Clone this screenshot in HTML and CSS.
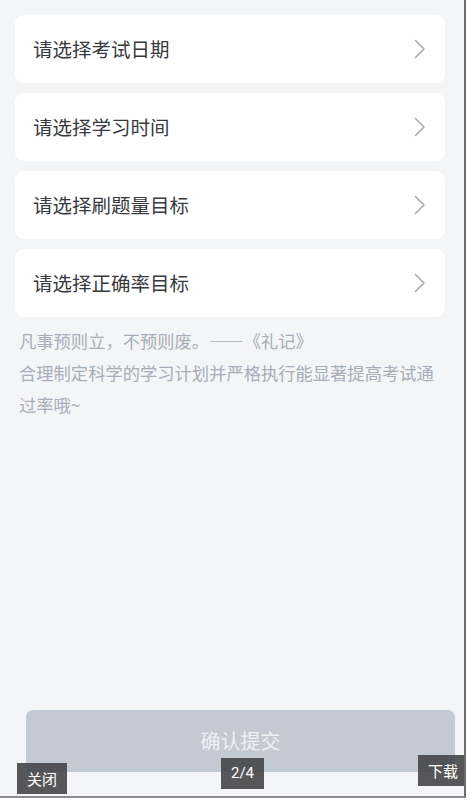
FILE: index.html
```html
<!DOCTYPE html>
<html lang="zh-CN">
<head>
    <meta charset="UTF-8">
    <meta name="viewport" content="width=device-width, initial-scale=1.0">
    <title>学习计划</title>
    <link rel="stylesheet" href="styles.css">
</head>
<body>
    <div class="screen">
        <div class="options">
            <div class="option">
                <span>请选择考试日期</span>
                <svg class="chevron" viewBox="0 0 12 20"><polyline points="1.5,1.5 10,10 1.5,18.5"/></svg>
            </div>
            <div class="option">
                <span>请选择学习时间</span>
                <svg class="chevron" viewBox="0 0 12 20"><polyline points="1.5,1.5 10,10 1.5,18.5"/></svg>
            </div>
            <div class="option">
                <span>请选择刷题量目标</span>
                <svg class="chevron" viewBox="0 0 12 20"><polyline points="1.5,1.5 10,10 1.5,18.5"/></svg>
            </div>
            <div class="option">
                <span>请选择正确率目标</span>
                <svg class="chevron" viewBox="0 0 12 20"><polyline points="1.5,1.5 10,10 1.5,18.5"/></svg>
            </div>
        </div>

        <p class="tip">凡事预则立，不预则废。——《礼记》<br>合理制定科学的学习计划并严格执行能显著提高考试通过率哦~</p>

        <button class="submit" type="button">确认提交</button>

        <!-- image viewer toolbar -->
        <div class="viewer-btn close">关闭</div>
        <div class="viewer-btn counter">2/4</div>
        <div class="viewer-btn download">下载</div>
    </div>
</body>
</html>
```

FILE: styles.css
```css
* {
    margin: 0;
    padding: 0;
    box-sizing: border-box;
}
body {
    background: #ffffff;
    font-family: "Noto Sans CJK SC", "Noto Sans", sans-serif;
    color: #333;
}
.screen {
    position: relative;
    width: 466px;
    height: 798px;
    background: #f4f5f7;
    border-right: 2px solid #6b6d70;
    border-bottom: 2px solid #8a8c90;
    display: flex;
    flex-direction: column;
    overflow: hidden;
}
.options {
    display: flex;
    flex-direction: column;
    gap: 10px;
    padding: 15px 19px 0 15px;
}
.option {
    height: 68px;
    background: #ffffff;
    border-radius: 9px;
    display: flex;
    align-items: center;
    justify-content: space-between;
    padding: 0 19px 1px 18px;
    font-size: 19.5px;
    color: #383a3d;
}
.chevron {
    width: 12px;
    height: 20px;
    fill: none;
    stroke: #a5abb5;
    stroke-width: 1.6;
    stroke-linecap: round;
    stroke-linejoin: round;
}
.tip {
    margin-top: 8px;
    padding: 0 20px 0 19px;
    font-size: 17.3px;
    line-height: 32px;
    color: #a7adb9;
}
.submit {
    margin: auto 9px 24px 26px;
    height: 62px;
    border: none;
    border-radius: 7px;
    background: #c4cad4;
    color: #eef0f4;
    font-family: inherit;
    font-size: 20px;
    padding-bottom: 2px;
}
.viewer-btn {
    position: absolute;
    height: 31px;
    padding: 0 10px;
    background: rgba(70, 70, 72, 0.9);
    color: #ffffff;
    font-size: 15px;
    line-height: 31px;
}
.close {
    left: 17px;
    top: 763px;
}
.counter {
    left: 221px;
    top: 758px;
    font-family: Roboto, sans-serif;
}
.download {
    left: 418px;
    top: 755px;
    width: 50px;
}
```
